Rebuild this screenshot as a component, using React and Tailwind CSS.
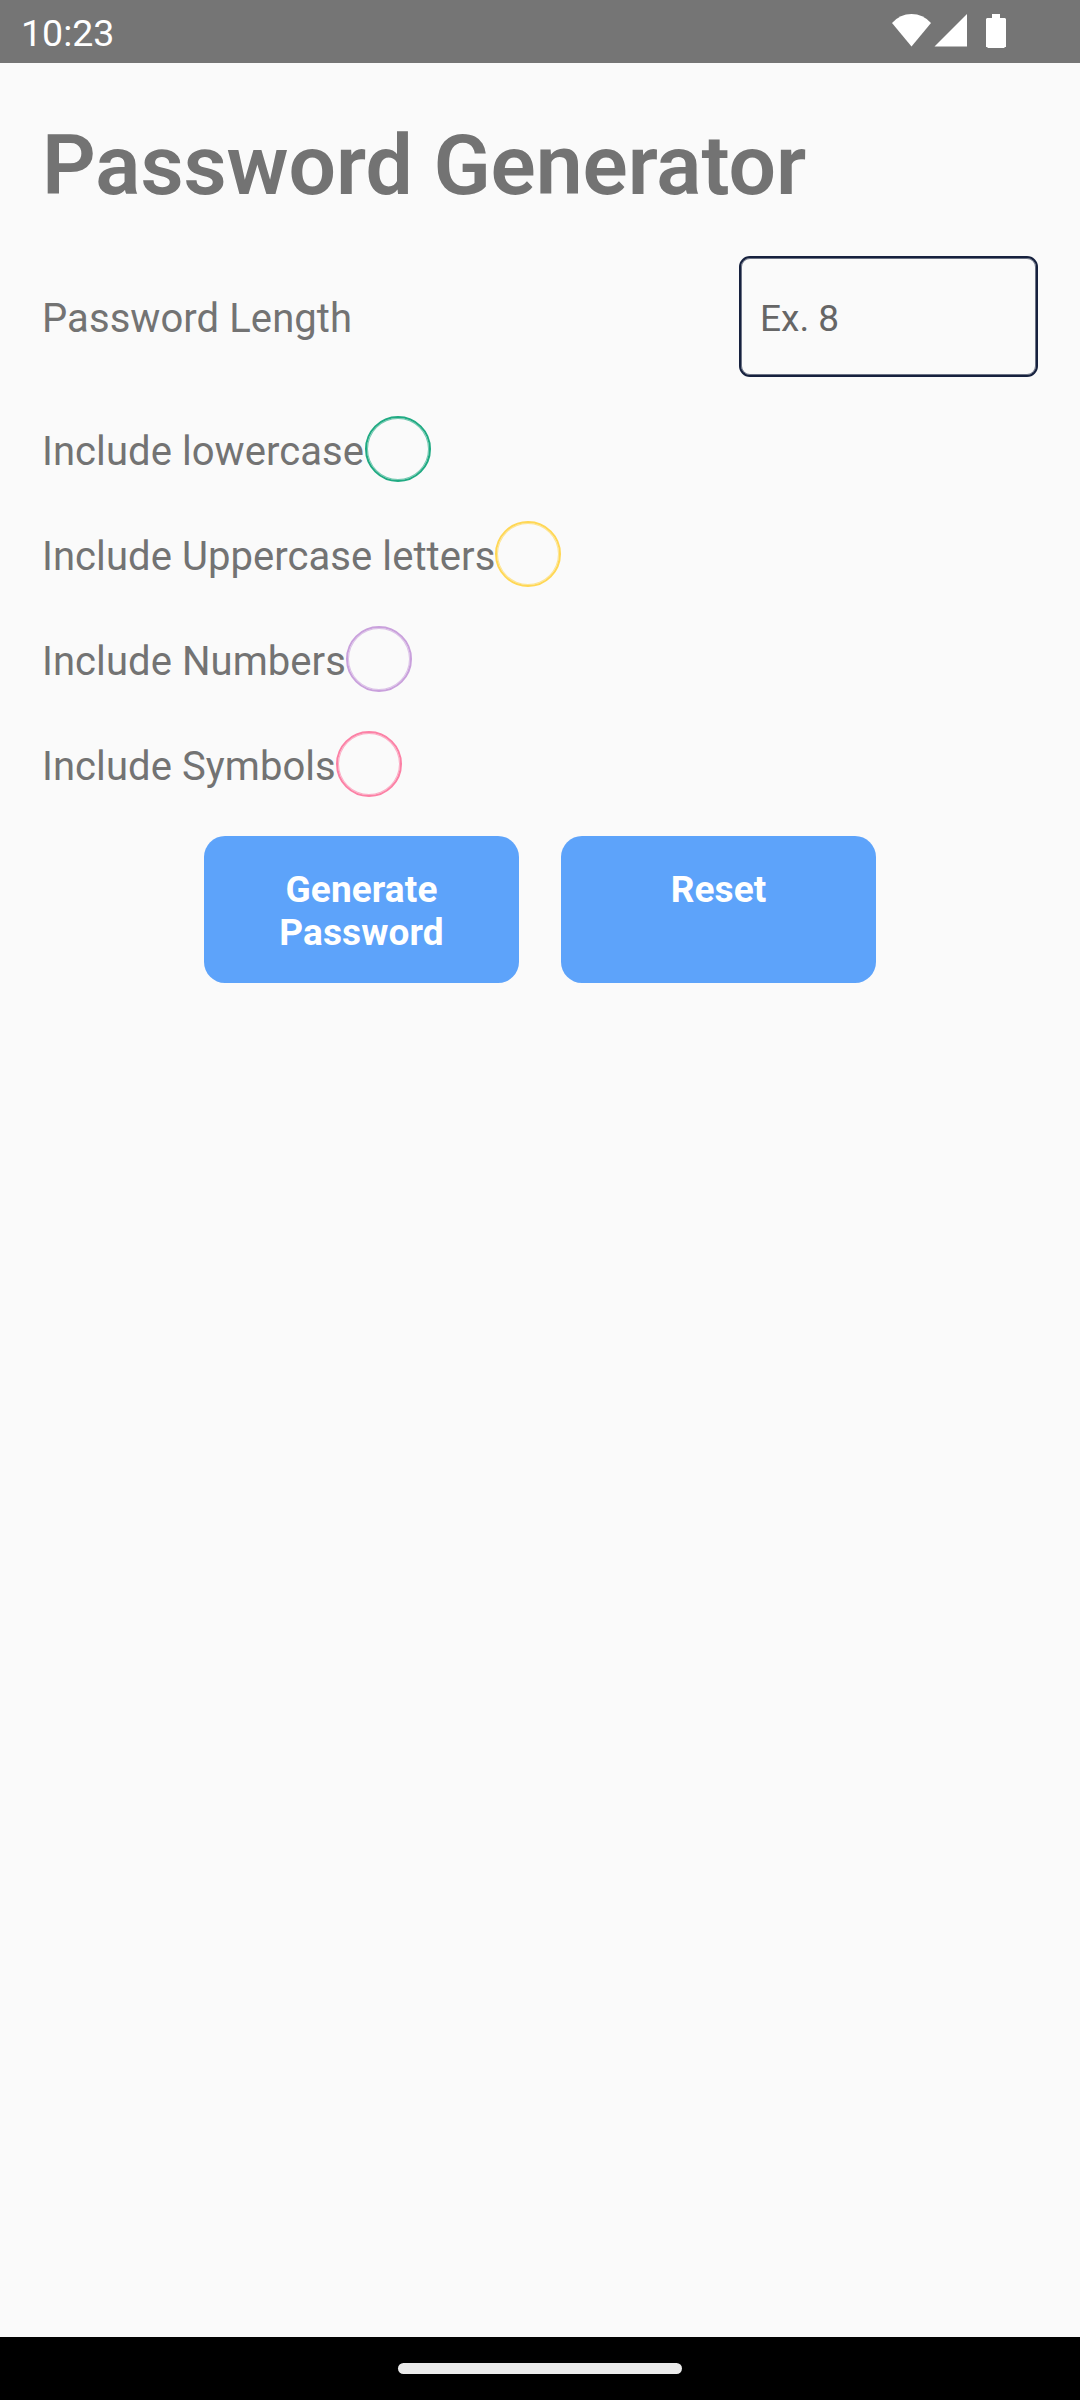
const options = [
  { label: 'Include lowercase', ring: 'border-[#1faa82] shadow-[inset_0_0_0_1px_#1faa82a0]', width: 'w-[323px]' },
  { label: 'Include Uppercase letters', ring: 'border-[#ffd754] shadow-[inset_0_0_0_1px_#ffd754a0]', width: 'w-[453px]' },
  { label: 'Include Numbers', ring: 'border-[#c9a0dc] shadow-[inset_0_0_0_1px_#c9a0dca0]', width: 'w-[304px]' },
  { label: 'Include Symbols', ring: 'border-[#fc80a5] shadow-[inset_0_0_0_1px_#fc80a5a0]', width: 'w-[294px]' },
];

function StatusBar() {
  return (
    <header className="flex h-[63px] items-start justify-between bg-[#757575] pl-[21px] pr-[72px] text-white">
      <span className="pt-[12px] text-[37.5px] leading-[43px]">10:23</span>
      <svg width="118" height="63" viewBox="890 0 118 63" fill="currentColor">
        <path d="M892 23Q900 14 911.500 14T931 23L911.500 46.500Z" />
        <path d="M967 14V46.500H934.500Z" />
        <path d="M992 14h8v4h5l1 1v28h-1l-1 1h-16l-1-1h-1V19l1-1h5z" />
      </svg>
    </header>
  );
}

export default function App() {
  return (
    <div className="flex h-[2400px] w-[1080px] flex-col bg-[#fafafa] font-['Roboto',sans-serif] text-[#737373]">
      <StatusBar />
      <main className="flex-1 px-[42px] pt-[43px]">
        <h1 className="h-[118px] whitespace-nowrap text-[84px] font-semibold leading-[119px] tracking-[-0.08px]">Password Generator</h1>
        <div className="mt-8 flex h-[121px] items-start justify-between">
          <label className="pt-[39px] text-[40px] leading-[47px] tracking-[0.07px]">Password Length</label>
          <input placeholder="Ex. 8" className="h-[121px] w-[299px] rounded-[11px] border-2 border-[#16213e] px-[19px] pt-[4px] text-[37px] shadow-[inset_0_0_0_1px_#16213ea0] placeholder:text-[#666666]" />
        </div>
        <div className="mt-[39px] flex flex-col gap-[39px]">
          {options.map(({ label, ring, width }) => (
            <label key={label} className="flex h-[66px] items-start">
              <span className={'shrink-0 whitespace-nowrap pt-[12px] text-[40px] leading-[47px] tracking-[0.07px] ' + width}>{label}</span>
              <span className={'size-[66px] shrink-0 rounded-full border-2 ' + ring} />
            </label>
          ))}
        </div>
        <div className="mt-[39px] flex justify-center gap-[42px] text-[37px] font-bold leading-[43px] tracking-[0.1px] text-white">
          <button className="flex h-[147px] w-[315px] items-start justify-center rounded-[21px] bg-[#5da3fa] px-[42px] pt-[32px]">Generate Password</button>
          <button className="flex h-[147px] w-[315px] items-start justify-center rounded-[21px] bg-[#5da3fa] pt-[32px]">Reset</button>
        </div>
      </main>
      <footer className="flex h-[63px] items-center justify-center bg-black">
        <div className="h-[11px] w-[284px] rounded-full bg-[#ebebeb]" />
      </footer>
    </div>
  );
}
